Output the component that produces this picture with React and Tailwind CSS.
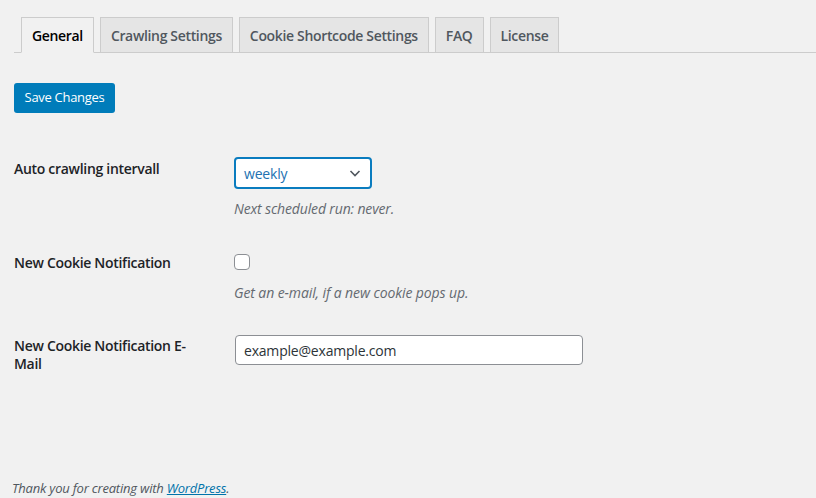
const tabs = ['General', 'Crawling Settings', 'Cookie Shortcode Settings', 'FAQ', 'License'];

const Chevron = () => (
  <svg width="16" height="16" viewBox="0 0 16 16" fill="none">
    <path d="M3.5 6l4.5 4.5L12.5 6" stroke="#50575e" strokeWidth="1.6" />
  </svg>
);

export default function App() {
  return (
    <div className="min-h-[498px] bg-[#f1f1f1] font-['Open_Sans',sans-serif] text-[#1d2327] flex flex-col">
      {/* tabs */}
      <nav className="ml-[14px] mt-[17px] flex items-end gap-[6px] pl-[7px] border-b border-[#cccccc]">
        {tabs.map((t, i) => (
          <div
            key={t}
            className={
              'h-[36px] -mb-px px-[10px] flex items-center border border-[#cccccc] text-[14px] font-semibold tracking-[-0.34px] ' +
              (i === 0 ? 'bg-[#f1f1f1] border-b-[#f1f1f1] text-black' : 'bg-[#e5e5e5] text-[#50575e]')
            }
          >
            {t}
          </div>
        ))}
      </nav>

      <div className="pl-[14px]">
        <button className="mt-[30px] h-[30px] w-[101px] rounded-[3px] bg-[#007cba] text-white text-[13px] tracking-[-0.3px]">
          Save Changes
        </button>

        {/* row 1 */}
        <div className="mt-[44px] flex">
          <div className="w-[220px] shrink-0 pt-[3px]">
            <div className="w-[190px] text-[14px] leading-[18px] font-semibold tracking-[-0.3px]">Auto crawling intervall</div>
          </div>
          <div>
            <div className="h-[32px] w-[138px] rounded-[4px] border-2 border-[#0a7cbf] bg-white flex items-center justify-between pl-[8px] pr-[7px]">
              <span className="text-[14px] text-[#2271b1] tracking-[-0.2px]">weekly</span>
              <Chevron />
            </div>
            <p className="mt-[10px] text-[14px] leading-[20px] italic text-[#646970] tracking-[-0.15px]">Next scheduled run: never.</p>
          </div>
        </div>

        {/* row 2 */}
        <div className="mt-[35px] flex">
          <div className="w-[220px] shrink-0">
            <div className="w-[190px] text-[14px] leading-[18px] font-semibold tracking-[-0.3px]">New Cookie Notification</div>
          </div>
          <div>
            <div className="h-[16px] w-[16px] rounded-[4px] border border-[#8c8f94] bg-white" />
            <p className="mt-[13px] text-[14px] leading-[20px] italic text-[#646970] tracking-[-0.1px]">Get an e-mail, if a new cookie pops up.</p>
          </div>
        </div>

        {/* row 3 */}
        <div className="mt-[32px] flex">
          <div className="w-[220px] shrink-0 pt-[2px]">
            <div className="w-[190px] text-[14px] leading-[18px] font-semibold tracking-[-0.3px]">New Cookie Notification E-Mail</div>
          </div>
          <div className="ml-[1px] h-[30px] w-[348px] rounded-[4px] border border-[#8c8f94] bg-white flex items-center px-[8px] text-[14px] text-[#2c3338] tracking-[-0.2px]">
            example@example.com
          </div>
        </div>
      </div>

      <footer className="mt-auto pl-[12px] pb-[1px] text-[13px] leading-[18px] italic text-[#50575e] tracking-[-0.2px]">
        Thank you for creating with <a className="text-[#0073aa] underline">WordPress</a>.
      </footer>
    </div>
  );
}
